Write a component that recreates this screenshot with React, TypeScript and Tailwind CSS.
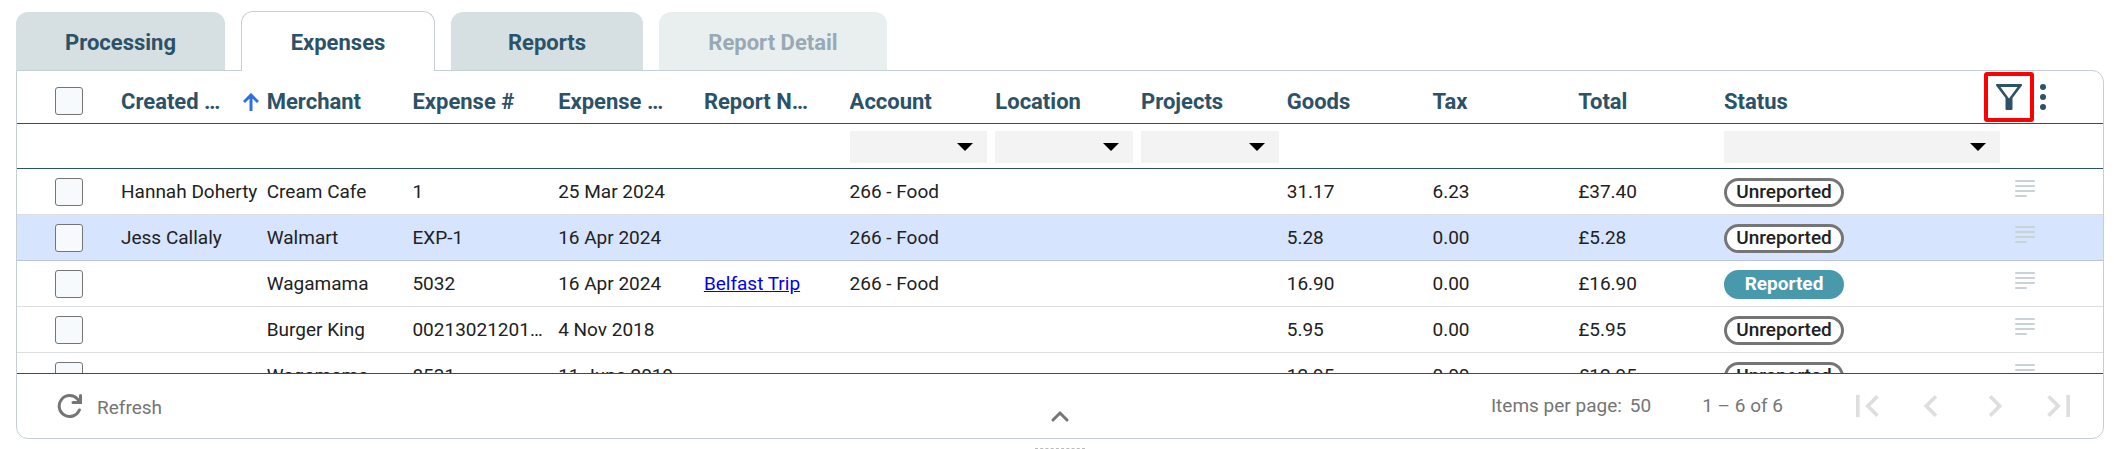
import { MdFirstPage, MdLastPage, MdChevronLeft, MdChevronRight } from "react-icons/md";

type Expense = {
  createdBy: string;
  merchant: string;
  number: string;
  date: string;
  report?: string;
  account?: string;
  goods: string;
  tax: string;
  total: string;
  reported?: boolean;
};

const expenses: Expense[] = [
  { createdBy: "Hannah Doherty", merchant: "Cream Cafe", number: "1", date: "25 Mar 2024", account: "266 - Food", goods: "31.17", tax: "6.23", total: "£37.40" },
  { createdBy: "Jess Callaly", merchant: "Walmart", number: "EXP-1", date: "16 Apr 2024", account: "266 - Food", goods: "5.28", tax: "0.00", total: "£5.28" },
  { createdBy: "", merchant: "Wagamama", number: "5032", date: "16 Apr 2024", report: "Belfast Trip", account: "266 - Food", goods: "16.90", tax: "0.00", total: "£16.90", reported: true },
  { createdBy: "", merchant: "Burger King", number: "00213021201345", date: "4 Nov 2018", goods: "5.95", tax: "0.00", total: "£5.95" },
  { createdBy: "", merchant: "Wagamama", number: "8531", date: "11 June 2019", goods: "12.95", tax: "0.00", total: "£12.95" },
];

const tabs = [
  { label: "Processing", width: "w-[209px]" },
  { label: "Expenses", width: "w-[194px]" },
  { label: "Reports", width: "w-[192px]" },
  { label: "Report Detail", width: "w-[228px]" },
];

const columns = ["Merchant", "Expense #", "Expense Date", "Report Name", "Account", "Location", "Projects", "Goods", "Tax", "Total"];

const checkbox =
  "block h-7 w-7 appearance-none rounded-[3px] border border-[#757575] bg-[#f7fafd] checked:bg-[#2c5268]";

function FilterSelect({ label }: { label: string }) {
  return (
    <div className="relative mr-2 h-8 bg-[#f3f3f3]">
      <select aria-label={label} className="h-full w-full appearance-none bg-transparent px-3">
        <option value=""></option>
      </select>
      <span className="pointer-events-none absolute top-3 right-[14px] border-x-8 border-t-8 border-x-transparent border-t-black" />
    </div>
  );
}

function SortIcon() {
  return (
    <svg className="shrink-0" width="16" height="18" viewBox="0 0 16 18" fill="none" stroke="#2f6fdf" strokeWidth="3">
      <path d="M8 18V2M1 9l7-7 7 7" />
    </svg>
  );
}

function FilterIcon() {
  return (
    <svg width="26" height="26" viewBox="0 0 26 26" fill="#2c5268" fillRule="evenodd">
      <path d="M1 0h24a1 1 0 0 1 .8 1.700L16.500 14v11a1 1 0 0 1-1 1h-5a1 1 0 0 1-1-1V14L.2 1.700A1 1 0 0 1 1 0zM4.500 3L13 14.500 21.500 3z" />
    </svg>
  );
}

function MoreIcon() {
  return (
    <svg width="6" height="26" viewBox="0 0 6 26" fill="#2c5268">
      <circle cx="3" cy="3" r="3" />
      <circle cx="3" cy="13" r="3" />
      <circle cx="3" cy="23" r="3" />
    </svg>
  );
}

function NotesIcon() {
  return (
    <svg width="20" height="18" viewBox="0 0 20 18" stroke="#c8d3d7" strokeWidth="2" strokeLinecap="round">
      <path d="M1 1h18M1 6h18M1 11h18M1 16h10" />
    </svg>
  );
}

function RefreshIcon() {
  return (
    <svg width="26" height="26" viewBox="0 0 26 26" fill="none" stroke="#757575" strokeWidth="3" strokeLinecap="round">
      <path d="M22.400 17A10.500 10.500 0 1 1 20.500 6l3 3.500" />
      <path d="M23.500 2.500v7H16" />
    </svg>
  );
}

function Row({ expense, selected }: { expense: Expense; selected: boolean }) {
  return (
    <tr
      className={`h-[46px] border-b *:pt-0.5 ${
        selected ? "border-[#b9c5de] bg-[#d7e4fe]" : "border-[#dcdedf]"
      }`}
    >
      <td className="pl-[38px]">
        <input type="checkbox" aria-label={`Select ${expense.merchant}`} className={checkbox} />
      </td>
      <td className="whitespace-nowrap">{expense.createdBy}</td>
      <td>{expense.merchant}</td>
      <td className="truncate pr-2">{expense.number}</td>
      <td className="whitespace-nowrap">{expense.date}</td>
      <td>
        {expense.report && (
          <a href="#report" className="text-[#0000ee] underline">
            {expense.report}
          </a>
        )}
      </td>
      <td>{expense.account}</td>
      <td />
      <td />
      <td>{expense.goods}</td>
      <td>{expense.tax}</td>
      <td>{expense.total}</td>
      <td>
        <span
          className={
            expense.reported
              ? "flex h-[29px] w-[120px] items-center justify-center rounded-full bg-[#4799ab] font-bold text-white"
              : "flex h-[29px] w-[120px] items-center justify-center rounded-full border-3 border-[#757575] bg-white font-medium"
          }
        >
          {expense.reported ? "Reported" : "Unreported"}
        </span>
      </td>
      <td>
        <button aria-label="Notes" className="ml-[7px] block pb-1.5">
          <NotesIcon />
        </button>
      </td>
    </tr>
  );
}

export default function App() {
  return (
    <div className="bg-white pr-[10px] pl-4 font-[Roboto,sans-serif] text-[19px] leading-6 text-[#212121]">
      {/* Tabs */}
      <div role="tablist" className="flex items-end gap-4 pt-[11px] text-[22px] font-bold text-[#2c5268]">
        {tabs.map((tab) => {
          const active = tab.label === "Expenses";
          const disabled = tab.label === "Report Detail";
          return (
            <button
              key={tab.label}
              role="tab"
              aria-selected={active}
              disabled={disabled}
              className={`${tab.width} rounded-t-xl ${
                active
                  ? "relative -mb-px h-[60px] border border-b-0 border-[#c5d0d5] bg-white pt-0.5"
                  : disabled
                    ? "h-[58px] bg-[#e9efef] pt-1 text-[#98a9b6]"
                    : "h-[58px] bg-[#d6dfe1] pt-1"
              }`}
            >
              {tab.label}
            </button>
          );
        })}
      </div>

      {/* Expenses panel */}
      <div className="overflow-hidden rounded-xl rounded-tl-none border border-[#c5d0d5]">
        <div className="h-[303px] overflow-hidden border-b border-[#2c5268]">
          <table className="w-full table-fixed border-collapse text-left">
            <colgroup>
              <col className="w-[104px]" />
              <col />
              {columns.map((c) => (
                <col key={c} />
              ))}
              <col className="w-[284px]" />
              <col className="w-[95px]" />
            </colgroup>
            <thead className="text-[22px] text-[#2c5268]">
              <tr className="h-[52px] border-b border-[#2c5268]">
                <th className="pt-2 pl-[38px]">
                  <input type="checkbox" aria-label="Select all" className={checkbox} />
                </th>
                <th className="pt-2.5">
                  <button className="flex w-full items-center justify-between gap-4 pr-2">
                    <span className="truncate">Created By</span>
                    <SortIcon />
                  </button>
                </th>
                {columns.map((c) => (
                  <th key={c} className="truncate pt-2.5 pr-8">
                    {c}
                  </th>
                ))}
                <th className="pt-2.5">Status</th>
                <th>
                  <div className="-ml-6 flex items-center gap-1.5">
                    <button aria-label="Filter" className="flex h-[50px] w-[50px] items-center justify-center rounded-[3px] border-4 border-[#ff0000]">
                      <FilterIcon />
                    </button>
                    <button aria-label="More options">
                      <MoreIcon />
                    </button>
                  </div>
                </th>
              </tr>
              <tr className="h-[45px] border-b border-[#2c5268] *:pt-0.5">
                <td colSpan={6} />
                <td><FilterSelect label="Account filter" /></td>
                <td><FilterSelect label="Location filter" /></td>
                <td><FilterSelect label="Projects filter" /></td>
                <td colSpan={3} />
                <td><FilterSelect label="Status filter" /></td>
                <td />
              </tr>
            </thead>
            <tbody>
              {expenses.map((expense, i) => (
                <Row key={i} expense={expense} selected={i === 1} />
              ))}
            </tbody>
          </table>
        </div>

        {/* Footer */}
        <div className="grid h-[64px] grid-cols-[1fr_auto_1fr] items-center px-5 text-[#757575]">
          <button className="flex items-center gap-3.5 pl-5">
            <RefreshIcon />
            <span className="pt-1">Refresh</span>
          </button>
          <button aria-label="Collapse" className="mt-5">
            <svg width="18" height="12" viewBox="0 0 18 12" fill="none" stroke="#757575" strokeWidth="3" strokeLinecap="round">
              <path d="M2 10l7-7 7 7" />
            </svg>
          </button>
          <div className="flex items-center justify-end">
            <span className="mr-2">Items per page:</span>
            <span className="mr-[51px]">50</span>
            <span className="mr-[60px]">1 – 6 of 6</span>
            <div className="flex gap-4 text-[#dedede]">
              <button aria-label="First page" disabled className="p-0.5"><MdFirstPage size={44} /></button>
              <button aria-label="Previous page" disabled className="p-0.5"><MdChevronLeft size={44} /></button>
              <button aria-label="Next page" disabled className="p-0.5"><MdChevronRight size={44} /></button>
              <button aria-label="Last page" disabled className="p-0.5"><MdLastPage size={44} /></button>
            </div>
          </div>
        </div>
      </div>

      {/* Resize handle */}
      <div className="mx-auto mt-[9px] w-[50px] border-t border-dashed border-[#bbbbbb]" />
    </div>
  );
}
